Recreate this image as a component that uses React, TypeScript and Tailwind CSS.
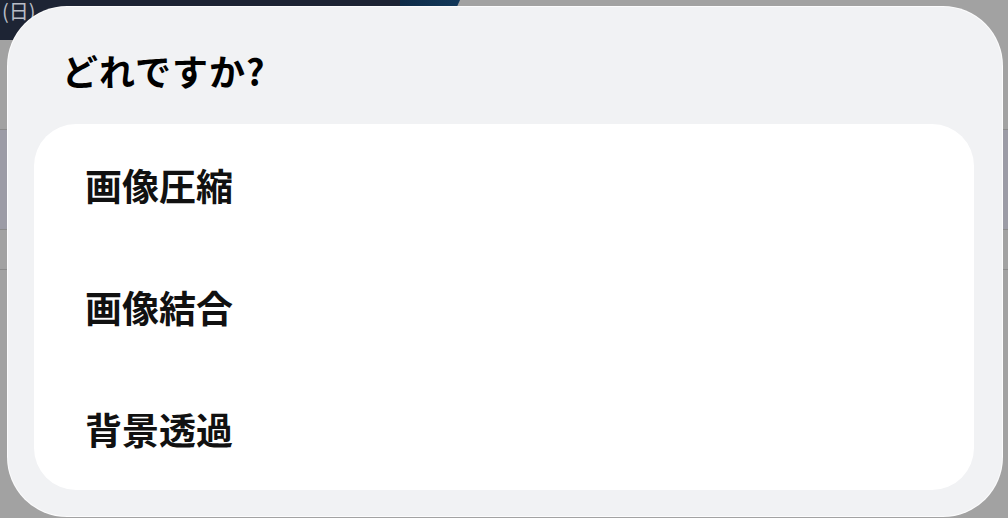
import React from 'react'

const ITEMS = ['画像圧縮', '画像結合', '背景透過']

export default function App() {
  return (
    <div
      className="relative w-[1008px] h-[518px] overflow-hidden bg-[#a2a2a2]"
      style={{ fontFamily: '"Noto Sans CJK JP", "Noto Sans", sans-serif' }}
    >
      {/* Dimmed page behind the sheet */}
      <div className="flex h-[40px]">
        <div className="w-[400px] bg-[#1d2434] text-[#b8bcc6] text-[20px] leading-[22px] pl-[2px]">(日)</div>
        <div className="w-[60px] bg-gradient-to-r from-[#0f2c48] to-[#12385a] [clip-path:polygon(0_0,100%_0,70%_100%,0_100%)]" />
      </div>
      <div className="flex flex-col">
        <div className="h-[90px] border-b border-[#8b8b8b]" />
        <div className="h-[100px] bg-[#9c9ca6] border-b border-[#8b8b8b]" />
        <div className="h-[40px] border-b border-[#8b8b8b]" />
      </div>

      {/* Sheet */}
      <div className="absolute left-[7px] top-[6px] w-[996px] h-[511px] rounded-[60px] bg-[#f1f2f4] border border-white/80 flex flex-col">
        <div className="h-[117px] pt-[8px] pl-[54px] flex items-center">
          <span className="text-[36px] font-bold leading-none text-black tracking-[1px]">どれですか?</span>
        </div>
        <div className="ml-[26px] mr-[28px] rounded-[42px] bg-white flex flex-col">
          {ITEMS.map((label) => (
            <div key={label} className="h-[122px] flex items-center pl-[51px]">
              <span className="text-[37px] font-bold leading-none text-[#111]">{label}</span>
            </div>
          ))}
        </div>
      </div>
    </div>
  )
}
